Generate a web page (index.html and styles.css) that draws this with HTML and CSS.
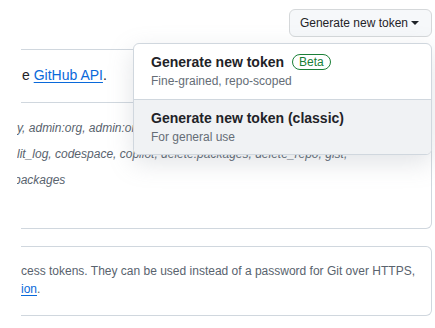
FILE: index.html
```html
<!DOCTYPE html>
<html lang="en">
<head>
    <meta charset="UTF-8">
    <meta name="viewport" content="width=device-width, initial-scale=1.0">
    <title>Personal access tokens</title>
    <link rel="stylesheet" href="styles.css">
</head>
<body>
    <div class="topbar">
        <button class="btn-sm" type="button">
            Generate new token
            <span class="caret"></span>
        </button>

        <!-- Open dropdown menu -->
        <div class="dropdown">
            <a href="#" class="dropdown-item">
                <div class="item-title">
                    Generate new token
                    <span class="label-beta">Beta</span>
                </div>
                <div class="item-desc">Fine-grained, repo-scoped</div>
            </a>
            <a href="#" class="dropdown-item hovered">
                <div class="item-title">Generate new token (classic)</div>
                <div class="item-desc">For general use</div>
            </a>
        </div>
    </div>

    <div class="content">
        <div class="box">
            <div class="box-header">
                <p class="lead">e <a href="#">GitHub API</a>.</p>
            </div>
            <div class="box-row">
                <div class="scope">y, admin:org, admin:org_hook, admin:public_key,</div>
                <div class="scope">lit_log, codespace, copilot, delete:packages, delete_repo, gist,</div>
                <div class="scope cut">packages</div>
            </div>
        </div>

        <div class="box note">
            <p>cess tokens. They can be used instead of a password for Git over HTTPS,</p>
            <p><a href="#">ion</a>.</p>
        </div>
    </div>
</body>
</html>
```

FILE: styles.css
```css
* {
    margin: 0;
    padding: 0;
    box-sizing: border-box;
}

body {
    background: #ffffff;
    color: #1f2328;
    font-family: 'Liberation Sans', Arial, sans-serif;
    font-size: 14px;
    line-height: 20px;
}

a {
    color: #0969da;
    text-decoration: underline;
    text-underline-offset: 2px;
}

.topbar {
    position: relative;
    display: flex;
    justify-content: flex-end;
    padding: 9px 3px 0 0;
}

.btn-sm {
    display: flex;
    align-items: center;
    gap: 3px;
    padding: 3px 12px 3px 10px;
    background: #f6f8fa;
    color: #1f2328;
    border: 1px solid #d5d8da;
    border-radius: 6px;
    font-family: inherit;
    font-size: 12px;
    line-height: 20px;
    cursor: pointer;
}

.caret {
    display: inline-block;
    width: 0;
    height: 0;
    border-top: 4px solid #1f2328;
    border-left: 4px solid transparent;
    border-right: 4px solid transparent;
}

/* Dropdown overlay */
.dropdown {
    position: absolute;
    top: 43px;
    left: 133px;
    width: 299px;
    background: #ffffff;
    border: 1px solid #d0d7de;
    border-radius: 6px;
    box-shadow: 0 8px 24px rgba(140, 149, 159, 0.25);
    overflow: hidden;
    z-index: 10;
}

.dropdown-item {
    display: block;
    padding: 8px 17px;
    color: #1f2328;
    text-decoration: none;
}

.dropdown-item:first-child {
    padding-bottom: 9px;
}

.dropdown-item + .dropdown-item {
    border-top: 1px solid #d0d7de;
}

.dropdown-item.hovered {
    background: #f0f2f4;
}

.item-title {
    display: flex;
    align-items: center;
    gap: 8px;
    font-size: 14px;
    font-weight: 700;
    line-height: 20px;
}

.item-desc {
    color: #656d76;
    font-size: 12px;
    line-height: 18px;
}

.label-beta {
    padding: 0 6px;
    border: 1px solid #1a7f37;
    border-radius: 2em;
    color: #1a7f37;
    font-size: 12px;
    font-weight: 400;
    line-height: 14px;
}

/* Page content, cut off on the left */
.content {
    margin: 12px 3px 0 17px;
    overflow: hidden;
}

.box {
    margin-left: 4px;
    border: 1px solid #d0d7de;
    border-left: none;
    border-radius: 0 6px 6px 0;
}

.box-header {
    padding: 15px 0 17px;
    border-bottom: 1px solid #d0d7de;
}

.lead {
    padding-left: 1px;
}

.box-row {
    padding: 12px 0 35px;
    margin-left: -4px;
}

.scope {
    color: #59636e;
    font-size: 12px;
    font-style: italic;
    line-height: 26px;
    white-space: nowrap;
}

.scope.cut {
    text-indent: -3px;
}

.note {
    margin-top: 17px;
    padding: 15px 0 17px;
    color: #59636e;
    font-size: 12px;
    line-height: 18px;
}
```
